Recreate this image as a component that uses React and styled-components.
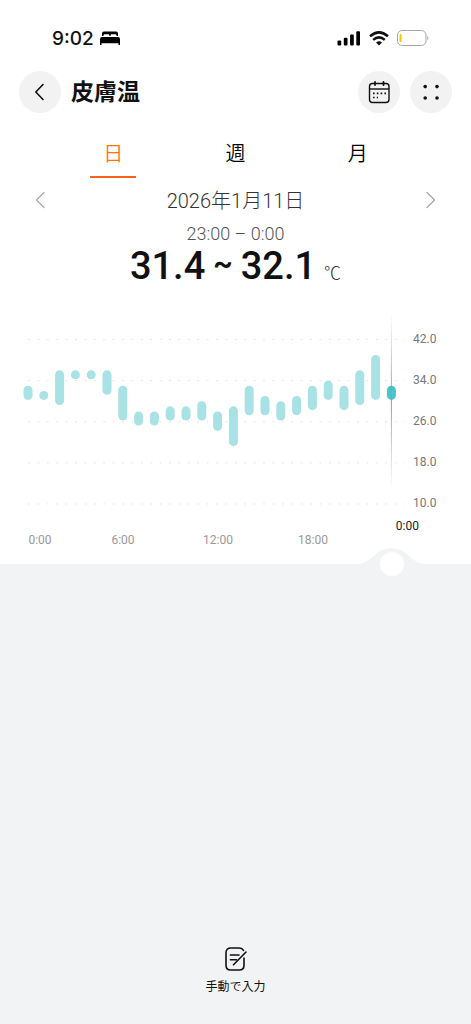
import React, { useState } from 'react'
import styled, { createGlobalStyle } from 'styled-components'

const GlobalStyle = createGlobalStyle`
  * {
    box-sizing: border-box;
  }
  body {
    margin: 0;
    background-color: #f1f3f5;
    font-family: Roboto, 'Noto Sans CJK JP', sans-serif;
    color: #111;
  }
  button {
    padding: 0;
    border: 0;
    background: none;
    color: inherit;
    font: inherit;
    cursor: pointer;
  }
`

const Page = styled.div`
  display: flex;
  flex-direction: column;
  min-height: 100vh;
`

const Panel = styled.main`
  background-color: #fff;
`

const StatusBar = styled.div`
  display: flex;
  align-items: center;
  justify-content: space-between;
  height: 70px;
  padding: 6px 42px 0 52px;
`

const StatusGroup = styled.div`
  display: flex;
  align-items: center;
  gap: ${({ $gap }) => $gap}px;
`

const Clock = styled.span`
  padding-top: 2px;
  font-family: Inter, sans-serif;
  font-size: 19px;
  font-weight: 500;
  line-height: 24px;
`

const Header = styled.header`
  display: flex;
  align-items: center;
  gap: 10px;
  height: 44px;
  padding: 0 19px;
  h1 {
    flex: 1;
    margin: 0;
    padding-top: 2px;
    font-size: 23px;
    line-height: 28px;
    font-weight: 700;
  }
`

const RoundButton = styled.button`
  display: flex;
  align-items: center;
  justify-content: center;
  width: 42px;
  height: 42px;
  border-radius: 50%;
  background-color: #f2f2f2;
`

const Tabs = styled.div`
  display: grid;
  grid-template-columns: repeat(3, 1fr);
  justify-items: center;
  padding: 14px 52px 0;
`

const Tab = styled.button`
  width: 46px;
  height: 50px;
  border-bottom: 2px solid ${({ $active }) => ($active ? '#fa6419' : 'transparent')};
  color: ${({ $active }) => ($active ? '#ff7410' : '#000')};
  font-size: 20px;
  font-weight: 350;
`

const DateRow = styled.div`
  display: flex;
  align-items: center;
  justify-content: space-between;
  height: 44px;
  padding: 0 30px;
  color: #333;
  font-size: 20px;
  font-weight: 300;
  span {
    padding-bottom: 2px;
  }
`

const ArrowButton = styled.button`
  display: flex;
  align-items: center;
  justify-content: center;
  width: 20px;
  height: 32px;
`

const Reading = styled.section`
  text-align: center;
  p {
    margin: 0;
  }
`

const Period = styled.p`
  color: #555;
  font-size: 18px;
  font-weight: 300;
  line-height: 24px;
`

const Value = styled.p`
  display: flex;
  align-items: baseline;
  justify-content: center;
  gap: 8px;
  font-size: 38px;
  line-height: 40px;
  font-weight: 500;
`

const Tilde = styled.span`
  align-self: flex-start;
  font-size: 30px;
  line-height: 36px;
  font-weight: 700;
`

const Unit = styled.span`
  color: #333;
  font-size: 17px;
  font-weight: 300;
`

const ChartArea = styled.div`
  position: relative;
  margin-top: 12px;
  > svg {
    display: block;
    width: 100%;
  }
`

// the thumb sits on the edge between the chart and the grey area below
const Scrubber = styled.input`
  position: absolute;
  left: 16px;
  bottom: -12px;
  width: calc(100% - 83px);
  height: 24px;
  margin: 0;
  background: none;
  appearance: none;
  cursor: pointer;
  &::-webkit-slider-thumb {
    appearance: none;
    width: 24px;
    height: 24px;
    border-radius: 50%;
    background-color: #fff;
  }
`

const Footer = styled.footer`
  display: flex;
  justify-content: center;
  margin-top: auto;
  padding-bottom: 27px;
`

const InputButton = styled.button`
  display: flex;
  flex-direction: column;
  align-items: center;
  gap: 6px;
  font-size: 12px;
  line-height: 20px;
`

// [low, high] for every hour of the day
const hours = [
  [32, 33], [32, 32], [31, 36], [36, 36], [36, 36], [33, 36],
  [28, 33], [27, 28], [27, 28], [28, 29], [28, 29], [28, 30],
  [26, 28], [23, 29], [29, 33], [29, 31], [28, 30], [29, 31],
  [30, 33], [32, 34], [30, 33], [31, 36], [32, 39], [32, 33]
]
const levels = [42, 34, 26, 18, 10]
const times = [
  { label: '0:00', x: 40 },
  { label: '6:00', x: 123 },
  { label: '12:00', x: 218 },
  { label: '18:00', x: 313 }
]

const BAR = 9
const hourX = (index) => 28 + index * 15.8
const levelY = (value) => 34.5 + (42 - value) * 5.14

const Chart = ({ selected }) => {
  const x = hourX(selected)
  return (
    <svg viewBox="0 0 471 259" role="img" aria-label="皮膚温">
      <defs>
        <linearGradient id="cursor" x1="0" y1="0" x2="0" y2="1">
          <stop offset="0" stopColor="#999" stopOpacity="0" />
          <stop offset="0.5" stopColor="#999" />
          <stop offset="1" stopColor="#999" stopOpacity="0" />
        </linearGradient>
      </defs>
      {levels.map((level) => (
        <g key={level}>
          <line x1="28" x2="405" y1={levelY(level)} y2={levelY(level)} stroke="#e6e6e6" strokeDasharray="2 7.4" />
          <text x="413" y={levelY(level) + 3} fontSize="12" fill="#777">
            {level.toFixed(1)}
          </text>
        </g>
      ))}
      {hours.map(([low, high], index) => (
        <rect
          key={index}
          x={hourX(index) - BAR / 2}
          y={levelY(high)}
          width={BAR}
          height={levelY(low) - levelY(high) + BAR}
          rx={BAR / 2}
          fill={index === selected ? '#4bc5ca' : '#a8e2e4'}
        />
      ))}
      <rect x={x - 0.5} y="8" width="1" height="176" fill="url(#cursor)" />
      {times.map(({ label, x: center }) => (
        <text key={label} x={center} y="239" fontSize="12" fill="#999" textAnchor="middle">
          {label}
        </text>
      ))}
      <text x={x + 16} y="225" fontSize="12" fill="#222" textAnchor="middle">
        {`${(selected + 1) % 24}:00`}
      </text>
      <path
        transform={`translate(${x} 0)`}
        d="M-34 259C-18 258-17 243 0 243S18 258 34 259Z"
        fill="#f1f3f5"
      />
    </svg>
  )
}

const BedIcon = () => (
  <svg width="20" height="14" viewBox="0 0 20 14">
    <path d="M2 5V2.4Q2 .5 4 .5H16Q18 .5 18 2.4V5H16.5V4.2Q16.5 3.3 15.5 3.3H11.5Q10.6 3.3 10.6 4.2V5H9.4V4.2Q9.4 3.3 8.5 3.3H4.5Q3.5 3.3 3.5 4.2V5Z" />
    <path d="M0 8Q0 6 2 6H18Q20 6 20 8V14H18.5V12.2H1.5V14H0Z" />
  </svg>
)

const SignalIcon = () => (
  <svg width="24" height="15" viewBox="0 0 24 15">
    <rect x="0.5" y="9.5" width="3.7" height="5" rx="1" />
    <rect x="6.8" y="6.7" width="3.7" height="7.8" rx="1" />
    <rect x="13.1" y="3.5" width="3.7" height="11" rx="1" />
    <rect x="19.3" y="0.3" width="3.7" height="14.2" rx="1" />
  </svg>
)

const WifiIcon = () => (
  <svg width="20" height="15" viewBox="0 0 20 15" fill="none" stroke="#111" strokeWidth="2.5">
    <path d="M1 5.3Q10-2.5 19 5.3" />
    <path d="M4.2 8.9Q10 3.9 15.8 8.9" />
    <path d="M10 14.5L7 11.5Q10 9.2 13 11.5Z" fill="#111" stroke="none" />
  </svg>
)

const BatteryIcon = () => (
  <svg width="32" height="16" viewBox="0 0 32 16">
    <rect x="0.5" y="0.5" width="28.5" height="15" rx="4.5" fill="none" stroke="#a5a5a5" />
    <rect x="2.5" y="4" width="2" height="8" rx="0.8" fill="#ffc400" />
    <path d="M30.3 5.8Q32.3 8 30.3 10.2Z" fill="#999" />
  </svg>
)

const CalendarIcon = () => (
  <svg width="22" height="23" viewBox="0 0 22 23" fill="none" stroke="#111" strokeWidth="1.4">
    <rect x="1.5" y="2.5" width="19.5" height="19" rx="3" />
    <path d="M1.5 8H21" />
    <path d="M7 1V4M15.5 1V4" strokeWidth="1.8" strokeLinecap="round" />
    <path d="M5 12.3H18M5 16.5H10" strokeWidth="1.7" strokeDasharray="1.6 2.2" />
  </svg>
)

const DotsIcon = () => (
  <svg width="16" height="16" viewBox="0 0 16 16" fill="#111">
    <circle cx="2.2" cy="2.6" r="1.8" />
    <circle cx="14" cy="2.6" r="1.8" />
    <circle cx="2.2" cy="14" r="1.8" />
    <circle cx="14" cy="14" r="1.8" />
  </svg>
)

const Chevron = ({ points, color, width }) => (
  <svg width="10" height="18" viewBox="0 0 10 18" fill="none" stroke={color} strokeWidth={width}>
    <polyline points={points} strokeLinecap="round" strokeLinejoin="round" />
  </svg>
)

const NoteIcon = () => (
  <svg width="23" height="24" viewBox="0 0 23 24" fill="none" stroke="#111" strokeWidth="1.6" strokeLinecap="round">
    <path d="M19.5 3.5Q18.3 1 15 1H6.8Q2 1 2 5.8V18.2Q2 23 6.8 23H15.2Q20 23 20 18.2V11" />
    <path d="M6.4 8H15M6.4 12.8H12.5" />
    <path d="M9.5 17.8L22 5" />
  </svg>
)

const App = () => {
  const [tab, setTab] = useState('日')
  const [hour, setHour] = useState(23)

  return (
    <Page>
      <GlobalStyle />
      <Panel>
        <StatusBar>
          <StatusGroup $gap={6}>
            <Clock>9:02</Clock>
            <BedIcon />
          </StatusGroup>
          <StatusGroup $gap={8}>
            <SignalIcon />
            <WifiIcon />
            <BatteryIcon />
          </StatusGroup>
        </StatusBar>
        <Header>
          <RoundButton aria-label="戻る">
            <Chevron points="8,1.5 0.8,9 8,16.5" color="#111" width="1.6" />
          </RoundButton>
          <h1>皮膚温</h1>
          <RoundButton aria-label="カレンダー">
            <CalendarIcon />
          </RoundButton>
          <RoundButton aria-label="メニュー">
            <DotsIcon />
          </RoundButton>
        </Header>
        <Tabs role="tablist">
          {['日', '週', '月'].map((name) => (
            <Tab key={name} role="tab" aria-selected={name === tab} $active={name === tab} onClick={() => setTab(name)}>
              {name}
            </Tab>
          ))}
        </Tabs>
        <DateRow>
          <ArrowButton aria-label="前の日">
            <Chevron points="9,1.5 1.5,9 9,16.5" color="#aaa" width="1.4" />
          </ArrowButton>
          <span>2026年1月11日</span>
          <ArrowButton aria-label="次の日">
            <Chevron points="1,1.5 8.5,9 1,16.5" color="#aaa" width="1.4" />
          </ArrowButton>
        </DateRow>
        <Reading>
          <Period>23:00 – 0:00</Period>
          <Value>
            31.4
            <Tilde>~</Tilde>
            32.1
            <Unit>℃</Unit>
          </Value>
        </Reading>
        <ChartArea>
          <Chart selected={hour} />
          <Scrubber
            type="range"
            min="0"
            max="23"
            value={hour}
            aria-label="時刻"
            onChange={(e) => setHour(Number(e.target.value))}
          />
        </ChartArea>
      </Panel>
      <Footer>
        <InputButton>
          <NoteIcon />
          手動で入力
        </InputButton>
      </Footer>
    </Page>
  )
}

export default App
